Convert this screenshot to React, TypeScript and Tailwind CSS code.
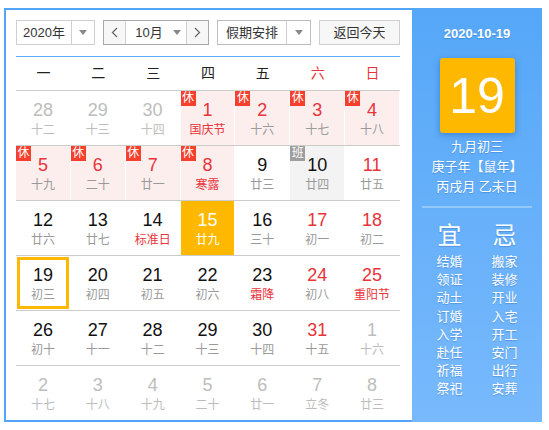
import React from "react";

type Day = {
  n: number;
  l: string;
  muted?: boolean;
  red?: boolean;
  fest?: boolean;
  rest?: boolean;
  work?: boolean;
  today?: boolean;
  picked?: boolean;
};

const WEEK = ["一", "二", "三", "四", "五", "六", "日"];

const ROWS: Day[][] = [
  [
    { n: 28, l: "十二", muted: true },
    { n: 29, l: "十三", muted: true },
    { n: 30, l: "十四", muted: true },
    { n: 1, l: "国庆节", red: true, fest: true, rest: true },
    { n: 2, l: "十六", red: true, rest: true },
    { n: 3, l: "十七", red: true, rest: true },
    { n: 4, l: "十八", red: true, rest: true },
  ],
  [
    { n: 5, l: "十九", red: true, rest: true },
    { n: 6, l: "二十", red: true, rest: true },
    { n: 7, l: "廿一", red: true, rest: true },
    { n: 8, l: "寒露", red: true, fest: true, rest: true },
    { n: 9, l: "廿三" },
    { n: 10, l: "廿四", work: true },
    { n: 11, l: "廿五", red: true },
  ],
  [
    { n: 12, l: "廿六" },
    { n: 13, l: "廿七" },
    { n: 14, l: "标准日", fest: true },
    { n: 15, l: "廿九", today: true },
    { n: 16, l: "三十" },
    { n: 17, l: "初一", red: true },
    { n: 18, l: "初二", red: true },
  ],
  [
    { n: 19, l: "初三", picked: true },
    { n: 20, l: "初四" },
    { n: 21, l: "初五" },
    { n: 22, l: "初六" },
    { n: 23, l: "霜降", fest: true },
    { n: 24, l: "初八", red: true },
    { n: 25, l: "重阳节", red: true, fest: true },
  ],
  [
    { n: 26, l: "初十" },
    { n: 27, l: "十一" },
    { n: 28, l: "十二" },
    { n: 29, l: "十三" },
    { n: 30, l: "十四" },
    { n: 31, l: "十五", red: true },
    { n: 1, l: "十六", muted: true },
  ],
  [
    { n: 2, l: "十七", muted: true },
    { n: 3, l: "十八", muted: true },
    { n: 4, l: "十九", muted: true },
    { n: 5, l: "二十", muted: true },
    { n: 6, l: "廿一", muted: true },
    { n: 7, l: "立冬", muted: true },
    { n: 8, l: "廿三", muted: true },
  ],
];

const YI = ["结婚", "领证", "动土", "订婚", "入学", "赴任", "祈福", "祭祀"];
const JI = ["搬家", "装修", "开业", "入宅", "开工", "安门", "出行", "安葬"];

const Caret = () => (
  <span className="block w-0 h-0 border-x-[4px] border-x-transparent border-t-[5px] border-t-[#888]" />
);

const Cell = ({ d }: { d: Day }) => {
  let bg = "bg-white";
  if (d.rest) bg = "bg-[#fdeeee]";
  if (d.work) bg = "bg-[#f3f3f3]";
  if (d.today) bg = "bg-[#ffb800]";

  let num = "text-[#111]";
  if (d.red) num = "text-[#e8333a]";
  if (d.muted) num = "text-[#bdbdbd]";
  if (d.today) num = "text-white";

  let lunar = "text-[#9a9a9a]";
  if (d.fest) lunar = "text-[#e8333a]";
  if (d.muted) lunar = "text-[#bdbdbd]";
  if (d.today) lunar = "text-white";

  return (
    <div className={`relative h-[54px] border-r border-white flex flex-col items-center pt-[8px] ${bg}`}>
      {d.picked && <div className="absolute inset-[1px] border-[3px] border-[#ffb800]" />}
      {d.rest && (
        <span className="absolute left-0 top-0 w-[15px] h-[15px] bg-[#f6402d] text-white text-[12px] leading-[15px] text-center">
          休
        </span>
      )}
      {d.work && (
        <span className="absolute left-0 top-0 w-[15px] h-[15px] bg-[#9e9e9e] text-white text-[12px] leading-[15px] text-center">
          班
        </span>
      )}
      <span className={`text-[18px] leading-[22px] font-['Liberation_Sans',sans-serif] ${num}`}>{d.n}</span>
      <span className={`text-[12px] leading-[18px] ${lunar}`}>{d.l}</span>
    </div>
  );
};

export default function App() {
  return (
    <div className="pl-[4px] pt-[8px] font-['Liberation_Sans','Noto_Sans_CJK_SC',sans-serif]">
      <div className="w-[538px] h-[414px] border-l-2 border-t-2 border-b-2 border-[#52a5f7] flex">
        {/* calendar */}
        <div className="w-[406px] pl-[10px] pr-[12px] pt-[10px]">
          <div className="flex gap-[8px] h-[25px] text-[13px] text-[#333]">
            <div className="w-[79px] flex border border-[#cfcfcf]">
              <span className="flex-1 flex items-center justify-center border-r border-[#cfcfcf]">2020年</span>
              <span className="w-[22px] flex items-center justify-center"><Caret /></span>
            </div>
            <div className="w-[106px] flex border border-[#a8a8a8]">
              <span className="w-[22px] flex items-center justify-center bg-[#f7f7f7] border-r border-[#cfcfcf] text-[#666]">
                <svg width="7" height="11" viewBox="0 0 7 11"><path d="M6 1 1.5 5.5 6 10" fill="none" stroke="#666" strokeWidth="1.2" /></svg>
              </span>
              <span className="flex-1 flex items-center justify-center gap-[10px] pl-[4px]">
                10月<Caret />
              </span>
              <span className="w-[22px] flex items-center justify-center bg-[#f7f7f7] border-l border-[#cfcfcf]">
                <svg width="7" height="11" viewBox="0 0 7 11"><path d="M1 1 5.5 5.5 1 10" fill="none" stroke="#666" strokeWidth="1.2" /></svg>
              </span>
            </div>
            <div className="w-[94px] flex border border-[#bdbdbd]">
              <span className="flex-1 flex items-center justify-center border-r border-[#cfcfcf]">假期安排</span>
              <span className="w-[23px] flex items-center justify-center"><Caret /></span>
            </div>
            <button className="w-[81px] border border-[#cfcfcf] bg-[#f7f7f7] text-[13px] text-[#333]">返回今天</button>
          </div>

          <div className="mt-[11px] h-px bg-[#5aaaf8]" />
          <div className="grid grid-cols-7 h-[33px] items-center text-center text-[14px] text-[#222]">
            {WEEK.map((w, i) => (
              <span key={w} className={i >= 5 ? "text-[#e8333a]" : ""}>{w}</span>
            ))}
          </div>

          {ROWS.map((row, r) => (
            <div key={r} className="border-t border-[#cccccc] grid grid-cols-7">
              {row.map((d, i) => (
                <Cell key={i} d={d} />
              ))}
            </div>
          ))}
        </div>

        {/* side panel */}
        <div className="w-[130px] -mt-[2px] -mb-[2px] bg-gradient-to-b from-[#55a7f8] to-[#78b9fc] text-white flex flex-col items-center [text-shadow:0_1px_1px_rgba(0,60,140,0.25)]">
          <div className="mt-[17px] text-[13px] font-bold leading-[18px]">2020-10-19</div>
          <div className="mt-[15px] w-[75px] h-[75px] rounded-[3px] bg-[#ffb800] shadow-[0_2px_6px_rgba(0,60,140,0.35)] flex items-center justify-center text-[50px] leading-none [text-shadow:none]">
            19
          </div>
          <div className="mt-[4px] text-[13px] leading-[20px] text-center">
            <div>九月初三</div>
            <div>庚子年【鼠年】</div>
            <div>丙戌月 乙未日</div>
          </div>
          <div className="mt-[9px] w-[110px] h-[2px] bg-white/30" />
          <div className="mt-[14px] w-[110px] grid grid-cols-2 text-center">
            <div className="flex flex-col">
              <span className="text-[24px] leading-[28px]">宜</span>
              <div className="mt-[3px] text-[13px] leading-[18.2px]">
                {YI.map((t) => <div key={t}>{t}</div>)}
              </div>
            </div>
            <div className="flex flex-col">
              <span className="text-[24px] leading-[28px]">忌</span>
              <div className="mt-[3px] text-[13px] leading-[18.2px]">
                {JI.map((t) => <div key={t}>{t}</div>)}
              </div>
            </div>
          </div>
        </div>
      </div>
    </div>
  );
}
